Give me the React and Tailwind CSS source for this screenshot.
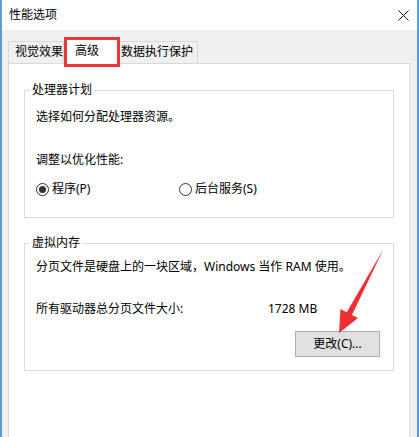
import React from 'react';

const font = "font-['Noto_Sans','Noto_Sans_CJK_SC',sans-serif]";

const Radio = ({ checked, label }) => (
    <div className="flex items-center h-[16px]">
        <span className="w-[13px] h-[13px] rounded-full border border-[#333] bg-white flex items-center justify-center">
            {checked && <span className="w-[7px] h-[7px] rounded-full bg-[#333]" />}
        </span>
        <span className="ml-[3px]">{label}</span>
    </div>
);

const GroupBox = ({ title, className, children }) => (
    <fieldset className={`border border-[#dcdcdc] pl-[11px] ${className}`}>
        <legend className="ml-[-6px] px-[2px] leading-[16px]">{title}</legend>
        {children}
    </fieldset>
);

const App = () => {
    return (
        <div className={`relative w-[419px] h-[437px] overflow-hidden bg-[#f0f0f0] border-x-2 border-[#5d9bd8] text-[12px] leading-[16px] text-black ${font}`}>
            {/* title bar */}
            <div className="h-[30px] bg-white flex items-center justify-between">
                <span className="pl-[7px]">性能选项</span>
                <div className="w-[28px] h-[30px] flex items-center justify-center">
                    <svg width="11" height="11" viewBox="0 0 11 11">
                        <path d="M0.5 0.5 L10.5 10.5 M10.5 0.5 L0.5 10.5" stroke="#111" strokeWidth="1" />
                    </svg>
                </div>
            </div>

            <div className="pl-[6px] pr-[7px]">
                {/* tabs */}
                <div className="flex items-end h-[33px]">
                    <div className="w-[56px] h-[22px] border border-b-0 border-[#d9d9d9] pl-[6px] pt-[2px]">视觉效果</div>
                    <div className="relative z-10 w-[55px] h-[27px] -mb-px bg-white border border-b-0 border-[#d9d9d9] pl-[10px] pt-[5px]">
                        高级
                        <div className="absolute -left-[1px] -right-[2px] -top-[1px] -bottom-[3px] border-[3px] border-[#e8373a]" />
                    </div>
                    <div className="w-[79px] h-[22px] border border-b-0 border-l-0 border-[#d9d9d9] pl-[2px] pt-[2px]">数据执行保护</div>
                </div>

                {/* panel */}
                <div className="h-[420px] bg-white border border-[#d9d9d9] pt-[18px] px-[15px]">
                    <GroupBox title="处理器计划" className="pt-[11px] pb-[20px]">
                        <p>选择如何分配处理器资源。</p>
                        <p className="mt-[27px]">调整以优化性能:</p>
                        <div className="flex mt-[13px]">
                            <div className="w-[143px]">
                                <Radio checked label="程序(P)" />
                            </div>
                            <Radio label="后台服务(S)" />
                        </div>
                    </GroupBox>

                    <GroupBox title="虚拟内存" className="mt-[17px] pt-[8px] pb-[13px] pr-[13px]">
                        <p>分页文件是硬盘上的一块区域，Windows 当作 RAM 使用。</p>
                        <div className="flex mt-[26px]">
                            <span className="w-[232px]">所有驱动器总分页文件大小:</span>
                            <span>1728 MB</span>
                        </div>
                        <div className="flex justify-end mt-[14px]">
                            <button className="w-[85px] h-[26px] bg-[#e1e1e1] border border-[#adadad] flex items-center justify-center">
                                更改(C)...
                            </button>
                        </div>
                    </GroupBox>
                </div>
            </div>

            {/* red arrow annotation */}
            <svg className="absolute left-0 top-0 pointer-events-none" width="419" height="437" viewBox="0 0 419 437">
                <polygon points="381,250 350,315 356,318 337,333 338.5,309 344.7,312.2" fill="#ee2e33" />
            </svg>
        </div>
    );
};

export default App;
